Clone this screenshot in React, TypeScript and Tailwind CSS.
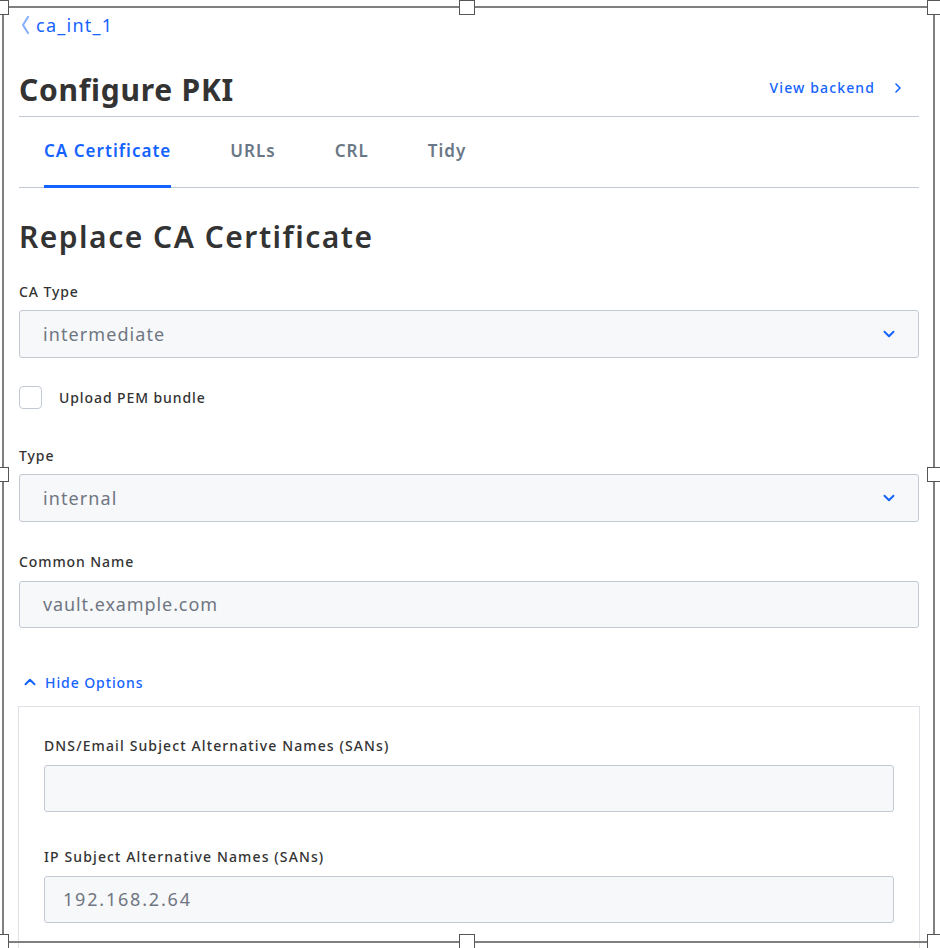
import { ChevronDown, ChevronRight, ChevronUp } from "lucide-react";

function Label({ children, wide }: { children: React.ReactNode; wide?: boolean }) {
  return (
    <div
      className={`h-5 text-[14px] leading-5 font-medium text-[#333] ${wide ? "tracking-[0.08em]" : "tracking-[0.065em]"}`}
    >
      {children}
    </div>
  );
}

function Select({ value }: { value: string }) {
  return (
    <div className="mt-2 flex h-12 items-center justify-between rounded-[3px] border border-[#c2c9d3] bg-[#f7f8fa] pl-[23px] pr-[20px]">
      <span className="text-[18px] tracking-[0.06em] text-[#6f7682]">{value}</span>
      <ChevronDown className="h-[18px] w-[18px] text-[#1563ff]" strokeWidth={2.6} />
    </div>
  );
}

function Input({ value, pad = "pl-[23px]", track = "tracking-[0.05em]" }: { value?: string; pad?: string; track?: string }) {
  return (
    <div className={`mt-[9px] flex h-[47px] items-center rounded-[3px] border border-[#c2c9d3] bg-[#f7f8fa] ${pad}`}>
      <span className={`text-[18px] text-[#6f7682] ${track}`}>{value}</span>
    </div>
  );
}

function Handle({ className }: { className: string }) {
  return <div className={`absolute h-[15px] w-[16px] border border-[#555] bg-white ${className}`} />;
}

export default function App() {
  return (
    <div className="relative h-[948px] w-[940px] overflow-hidden bg-white font-['Noto_Sans',sans-serif]">
      <div className="pl-[19px] pr-[21px] pt-[13px]">
        {/* breadcrumb */}
        <div className="flex h-6 items-center text-[18px] tracking-[0.07em] text-[#1563ff]">
          <svg width="9" height="18" viewBox="0 0 9 18" className="ml-[2px]">
            <polyline points="7,1 2,9 7,17" fill="none" stroke="#8ab1ff" strokeWidth="2.2" strokeLinejoin="round" strokeLinecap="round" />
          </svg>
          <span className="ml-[6px]">ca_int_1</span>
        </div>

        {/* header */}
        <div className="mt-[35px] flex items-end justify-between border-b border-[#c2c9d3] pb-2">
          <h1 className="text-[30px] font-bold leading-9 tracking-[0.025em] text-[#333]">Configure PKI</h1>
          <a className="mb-[10px] flex items-center text-[14px] font-medium tracking-[0.08em] text-[#1563ff]">
            View backend
            <ChevronRight className="ml-[15px] mr-[13px] h-4 w-4" strokeWidth={2.4} />
          </a>
        </div>

        {/* tabs */}
        <nav className="flex gap-[59px] border-b border-[#c2c9d3] pl-[25px] pt-[22px]">
          <div className="-mb-px border-b-[3px] border-[#1563ff] pb-[22px] text-[17px] font-semibold leading-6 tracking-[0.06em] text-[#1563ff]">
            CA Certificate
          </div>
          <div className="pb-[22px] text-[17px] font-semibold leading-6 tracking-[0.06em] text-[#6a7786]">URLs</div>
          <div className="pb-[22px] text-[17px] font-semibold leading-6 tracking-[0.06em] text-[#6a7786]">CRL</div>
          <div className="pb-[22px] text-[17px] font-semibold leading-6 tracking-[0.06em] text-[#6a7786]">Tidy</div>
        </nav>

        <h2 className="mt-[31px] text-[30px] font-semibold leading-9 tracking-[0.05em] text-[#333]">
          Replace CA Certificate
        </h2>

        <div className="mt-[27px]">
          <Label>CA Type</Label>
          <Select value="intermediate" />
        </div>

        <label className="mt-[28px] flex items-center">
          <span className="h-[23px] w-[23px] rounded-[4px] border border-[#c2c9d3] bg-white" />
          <span className="ml-[17px] text-[14px] font-medium tracking-[0.065em] text-[#333]">Upload PEM bundle</span>
        </label>

        <div className="mt-[37px]">
          <Label>Type</Label>
          <Select value="internal" />
        </div>

        <div className="mt-[30px]">
          <Label>Common Name</Label>
          <Input value="vault.example.com" />
        </div>

        <div className="mt-[44px] flex h-5 items-center text-[14px] font-medium tracking-[0.065em] text-[#1563ff]">
          <ChevronUp className="ml-[2px] h-[18px] w-[18px]" strokeWidth={2.6} />
          <span className="ml-[6px]">Hide Options</span>
        </div>

        <div className="-mx-px mt-[14px] border border-[#dfe3e8] px-[25px] pt-[29px] pb-8">
          <Label wide>DNS/Email Subject Alternative Names (SANs)</Label>
          <Input />
          <div className="mt-[35px]">
            <Label wide>IP Subject Alternative Names (SANs)</Label>
            <Input value="192.168.2.64" pad="pl-[18px]" track="tracking-[0.1em]" />
          </div>
        </div>
      </div>

      {/* selection frame overlay */}
      <div className="pointer-events-none absolute left-[2px] top-[6px] h-[937px] w-[933px] border-2 border-[#7f7f7f]" />
      <Handle className="-left-[7px] top-0" />
      <Handle className="left-[459px] top-0" />
      <Handle className="left-[927px] top-0" />
      <Handle className="-left-[7px] top-[467px]" />
      <Handle className="left-[927px] top-[467px]" />
      <Handle className="-left-[7px] top-[934px]" />
      <Handle className="left-[459px] top-[934px]" />
      <Handle className="left-[927px] top-[934px]" />
    </div>
  );
}
